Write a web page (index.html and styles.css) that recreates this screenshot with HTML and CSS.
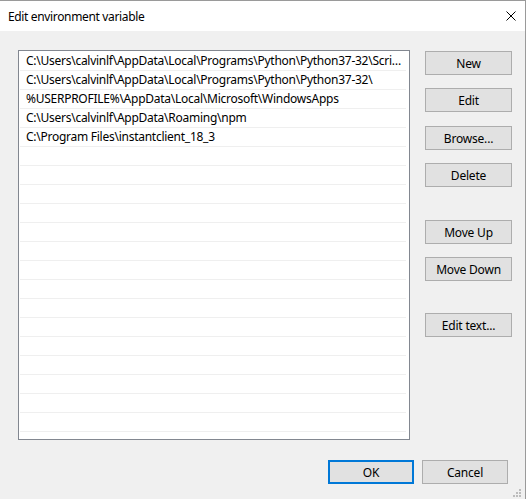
FILE: index.html
```html
<!DOCTYPE html>
<html lang="en">
<head>
    <meta charset="UTF-8">
    <meta name="viewport" content="width=device-width, initial-scale=1.0">
    <title>Edit environment variable</title>
    <link rel="stylesheet" href="styles.css">
</head>
<body>
    <div class="dialog">
        <div class="titlebar">
            <span class="title">Edit environment variable</span>
            <span class="close">
                <svg width="10" height="10" viewBox="0 0 10 10">
                    <path d="M0.5 0.5 L9.5 9.5 M9.5 0.5 L0.5 9.5" stroke="#000" stroke-width="1" fill="none"/>
                </svg>
            </span>
        </div>

        <div class="content">
            <div class="main">
                <ul class="path-list">
                    <li>C:\Users\calvinlf\AppData\Local\Programs\Python\Python37-32\Scripts\</li>
                    <li>C:\Users\calvinlf\AppData\Local\Programs\Python\Python37-32\</li>
                    <li>%USERPROFILE%\AppData\Local\Microsoft\WindowsApps</li>
                    <li>C:\Users\calvinlf\AppData\Roaming\npm</li>
                    <li>C:\Program Files\instantclient_18_3</li>
                    <li></li><li></li><li></li><li></li><li></li>
                    <li></li><li></li><li></li><li></li><li></li>
                    <li></li><li></li><li></li><li></li><li></li>
                </ul>

                <div class="side-buttons">
                    <button class="btn">New</button>
                    <button class="btn">Edit</button>
                    <button class="btn nudge">Browse...</button>
                    <button class="btn">Delete</button>
                    <button class="btn group-gap">Move Up</button>
                    <button class="btn">Move Down</button>
                    <button class="btn group-gap-sm">Edit text...</button>
                </div>
            </div>

            <div class="footer">
                <button class="btn btn-default">OK</button>
                <button class="btn">Cancel</button>
            </div>
        </div>

        <!-- resize grip -->
        <svg class="grip" width="9" height="9" viewBox="0 0 9 9">
            <rect x="6" y="0" width="2" height="2" fill="#bcbcbc"/>
            <rect x="3" y="3" width="2" height="2" fill="#bcbcbc"/>
            <rect x="6" y="3" width="2" height="2" fill="#bcbcbc"/>
            <rect x="0" y="6" width="2" height="2" fill="#bcbcbc"/>
            <rect x="3" y="6" width="2" height="2" fill="#bcbcbc"/>
            <rect x="6" y="6" width="2" height="2" fill="#bcbcbc"/>
        </svg>
    </div>
</body>
</html>
```

FILE: styles.css
```css
/* General Reset */
* {
    margin: 0;
    padding: 0;
    box-sizing: border-box;
}

body {
    font-family: 'Noto Sans', 'Open Sans', sans-serif;
    font-size: 12px;
    letter-spacing: -0.2px;
    color: #000;
    background: #f0f0f0;
    overflow: hidden;
}

/* Window frame */
.dialog {
    position: relative;
    width: 526px;
    height: 499px;
    border-top: 1px solid #9a9a9a;
    border-right: 1px solid #9a9a9a;
    background-color: #f0f0f0;
    display: flex;
    flex-direction: column;
}

/* Title bar */
.titlebar {
    height: 30px;
    background-color: #fff;
    display: flex;
    align-items: center;
    justify-content: space-between;
    padding-left: 8px;
    padding-right: 9px;
}

.title {
    font-size: 12px;
    line-height: 16px;
    letter-spacing: -0.35px;
    margin-top: 1px;
}

.close {
    display: flex;
    width: 10px;
    height: 10px;
    margin-top: -1px;
}

/* Content area */
.content {
    padding: 19px 13px 0 18px;
}

.main {
    display: flex;
    align-items: flex-start;
}

/* Path list */
.path-list {
    list-style: none;
    flex-shrink: 0;
    width: 392px;
    height: 390px;
    background-color: #fff;
    border: 1px solid #828790;
    padding-top: 1px;
    overflow: hidden;
}

.path-list li {
    height: 19px;
    line-height: 18px;
    letter-spacing: -0.26px;
    margin: 0 3px 0 1px;
    padding: 0 3px 0 6px;
    border-bottom: 1px solid #efefef;
    white-space: nowrap;
    overflow: hidden;
    text-overflow: ellipsis;
}

/* Buttons */
.btn {
    font-family: inherit;
    font-size: 12px;
    letter-spacing: inherit;
    color: #000;
    width: 87px;
    height: 24px;
    background-color: #e1e1e1;
    border: 1px solid #adadad;
    cursor: pointer;
}

.btn:hover {
    background-color: #e5f1fb;
    border-color: #0078d7;
}

.side-buttons {
    display: flex;
    flex-direction: column;
    flex-shrink: 0;
    gap: 13px;
    margin-left: 15px;
    margin-top: 1px;
}

.side-buttons .nudge {
    margin-top: 1px;
}

.side-buttons .group-gap {
    margin-top: 20px;
}

.side-buttons .group-gap-sm {
    margin-top: 19px;
}

/* Footer */
.footer {
    display: flex;
    justify-content: flex-end;
    gap: 8px;
    margin-top: 20px;
    padding-right: 4px;
}

.footer .btn {
    width: 86px;
}

.btn-default {
    border: 2px solid #0078d7;
}

/* Resize grip */
.grip {
    position: absolute;
    right: 3px;
    bottom: 1px;
}
```
